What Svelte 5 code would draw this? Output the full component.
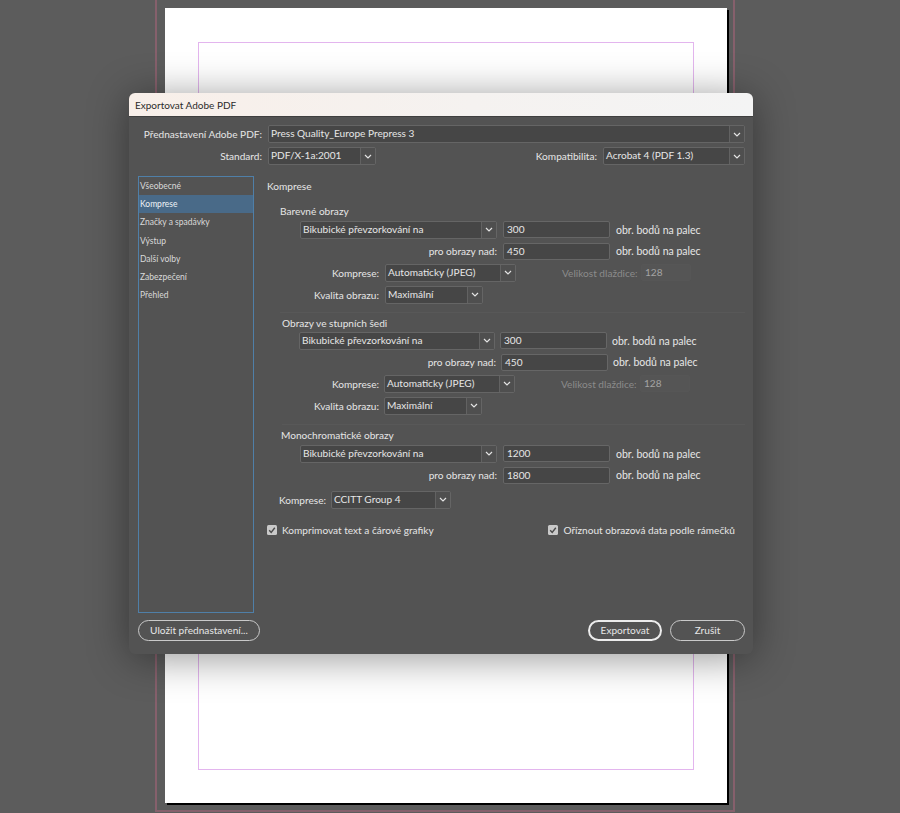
<script>
  const tabs = ['Všeobecné', 'Komprese', 'Značky a spadávky', 'Výstup', 'Další volby', 'Zabezpečení', 'Přehled'];
  const unit = 'obr. bodů na palec';
  const groups = [
    { title: 'Barevné obrazy', cls: 'g1', a: '300', b: '450', full: true },
    { title: 'Obrazy ve stupních šedi', cls: 'g2', a: '300', b: '450', full: true },
    { title: 'Monochromatické obrazy', cls: 'g3', a: '1200', b: '1800', full: false }
  ];
</script>

{#snippet dropdown(text, cls)}
  <div class="select {cls}">
    <span class="value">{text}</span>
    <span class="arrow">
      <svg width="8" height="5" viewBox="0 0 8 5"><path d="M1 1l3 3 3-3" fill="none" stroke="#e4e4e4" stroke-width="1.2"/></svg>
    </span>
  </div>
{/snippet}

{#snippet check(text)}
  <div class="check">
    <span class="box">
      <svg width="10" height="10" viewBox="0 0 10 10"><path d="M2.2 5.2l2 2.2 3.6-4.6" fill="none" stroke="#4a4a4a" stroke-width="1.4"/></svg>
    </span>
    <span>{text}</span>
  </div>
{/snippet}

<div class="canvas">
  <div class="bleed">
    <div class="page">
      <div class="margins"></div>
    </div>
  </div>

  <div class="dialog">
    <div class="titlebar">Exportovat Adobe PDF</div>
    <div class="body">
      <div class="top">
        <div class="toprow">
          <span class="toplabel">Přednastavení Adobe PDF:</span>
          {@render dropdown('Press Quality_Europe Prepress 3', 'preset')}
        </div>
        <div class="toprow">
          <span class="toplabel">Standard:</span>
          {@render dropdown('PDF/X-1a:2001', 'standard')}
          <span class="compat">Kompatibilita:</span>
          {@render dropdown('Acrobat 4 (PDF 1.3)', 'acrobat')}
        </div>
      </div>

      <div class="main">
        <div class="side">
          <ul class="tabs">
            {#each tabs as tab, i}
              <li class:active={i === 1}>{tab}</li>
            {/each}
          </ul>
          <div class="pill save">Uložit přednastavení...</div>
        </div>

        <div class="content">
          <div class="heading">Komprese</div>
          {#each groups as g}
            <section class="group {g.cls}">
              <div class="gtitle">{g.title}</div>
              <div class="rows">
                <div class="row">
                  {@render dropdown('Bikubické převzorkování na', 'sampling')}
                  <div class="input num">{g.a}</div>
                  <span class="unit">{unit}</span>
                </div>
                <div class="row">
                  <span class="lab wide">pro obrazy nad:</span>
                  <div class="input num">{g.b}</div>
                  <span class="unit">{unit}</span>
                </div>
                {#if g.full}
                  <div class="row">
                    <span class="lab">Komprese:</span>
                    {@render dropdown('Automaticky (JPEG)', 'auto')}
                    <span class="muted">Velikost dlaždice:</span>
                    <div class="input tile">128</div>
                  </div>
                  <div class="row">
                    <span class="lab">Kvalita obrazu:</span>
                    {@render dropdown('Maximální', 'quality')}
                  </div>
                {/if}
              </div>
              {#if !g.full}
                <div class="row mono">
                  <span class="monolab">Komprese:</span>
                  {@render dropdown('CCITT Group 4', 'ccitt')}
                </div>
              {/if}
            </section>
          {/each}
          <div class="checks">
            {@render check('Komprimovat text a čárové grafiky')}
            {@render check('Oříznout obrazová data podle rámečků')}
          </div>
          <div class="actions">
            <div class="pill primary">Exportovat</div>
            <div class="pill cancel">Zrušit</div>
          </div>
        </div>
      </div>
    </div>
  </div>
</div>

<style>
  :global(body) {
    margin: 0;
    background: #5b5b5b;
  }
  .canvas {
    position: relative;
    width: 900px;
    height: 813px;
    overflow: hidden;
    background: #5c5c5c;
    font-family: Lato, "Liberation Sans", sans-serif;
    font-size: 10.1px;
    color: #e6e6e6;
  }
  .bleed {
    box-sizing: border-box;
    width: 580px;
    height: 812px;
    margin-left: 155px;
    padding: 8px 0 0 8px;
    border: solid #86606c;
    border-width: 0 2px 2px 2px;
  }
  .page {
    box-sizing: border-box;
    width: 562px;
    height: 795px;
    padding: 34px 33px 34px 33px;
    background: #fff;
    box-shadow: 2px 2px 0 #000;
  }
  .margins {
    box-sizing: border-box;
    height: 728px;
    border: 1px solid #e3b5ee;
  }
  .dialog {
    position: absolute;
    left: 129px;
    top: 93px;
    width: 624px;
    height: 561px;
    display: flex;
    flex-direction: column;
    border-radius: 6px;
    overflow: hidden;
    background: #535353;
    box-shadow: 0 4px 40px rgba(0, 0, 0, 0.42);
  }
  .titlebar {
    box-sizing: border-box;
    height: 24px;
    padding: 5px 0 0 6px;
    flex: none;
    background: linear-gradient(90deg, #f8efe9, #f5f2f0 55%, #f4f4f4);
    border-bottom: 1px solid #3f3f3f;
    color: #2b2b2b;
    font-size: 10px;
    line-height: 14px;
  }
  .body {
    flex: 1;
    display: flex;
    flex-direction: column;
    padding: 8px 8px 13px 9px;
    min-height: 0;
  }
  .top {
    display: flex;
    flex-direction: column;
    gap: 4px;
  }
  .toprow {
    display: flex;
    align-items: center;
    height: 18px;
  }
  .toplabel {
    width: 124px;
    margin-right: 6px;
    text-align: right;
    white-space: nowrap;
  }
  .compat {
    margin-left: auto;
    margin-right: 6px;
  }
  .select {
    box-sizing: border-box;
    display: flex;
    height: 18px;
    flex: none;
    border: 1px solid #656565;
    border-radius: 2px;
    background: #464646;
    line-height: 15px;
  }
  .value {
    flex: 1;
    padding-left: 2px;
    white-space: nowrap;
    overflow: hidden;
  }
  .arrow {
    width: 14px;
    display: flex;
    align-items: center;
    justify-content: center;
    border-left: 1px solid #626262;
    background: #4f4f4f;
  }
  .preset { flex: 1; }
  .standard { width: 108px; }
  .acrobat { width: 142px; }
  .sampling { width: 197px; }
  .auto { width: 131px; }
  .quality { width: 98px; }
  .ccitt { width: 120px; }
  .main {
    flex: 1;
    display: flex;
    margin-top: 11px;
    min-height: 0;
  }
  .side {
    width: 122px;
    flex: none;
    display: flex;
    flex-direction: column;
    margin-right: 7px;
  }
  .tabs {
    box-sizing: border-box;
    width: 116px;
    height: 437px;
    list-style: none;
    margin: 0;
    padding: 0;
    border: 1px solid #4f7fa8;
    font-size: 8.5px;
    color: #d9d9d9;
  }
  .tabs li {
    height: 18.2px;
    line-height: 18.2px;
    padding-left: 1px;
  }
  .tabs li.active {
    background: #496a88;
    color: #eef2f6;
  }
  .pill {
    box-sizing: border-box;
    height: 21px;
    border: 1px solid #c9c9c9;
    border-radius: 11px;
    text-align: center;
    line-height: 19px;
    white-space: nowrap;
  }
  .save {
    width: 122px;
    margin-top: 7px;
  }
  .content {
    flex: 1;
    min-width: 0;
    display: flex;
    flex-direction: column;
  }
  .heading {
    height: 16px;
    margin-top: 2px;
    line-height: 16px;
  }
  .group {
    box-sizing: border-box;
    border-bottom: 1px solid #585858;
  }
  .g1 { margin: 11px 0 0 13px; height: 108px; }
  .g2 { margin: 4px 0 0 15px; height: 108px; }
  .g3 { margin: 4px 0 0 14px; border-bottom: 0; }
  .gtitle {
    height: 16px;
    line-height: 12px;
  }
  .rows {
    display: flex;
    flex-direction: column;
    gap: 4.7px;
    padding-left: 20px;
  }
  .g2 .rows { padding-left: 17px; }
  .g2 .gtitle { height: 15px; }
  .g2 .sampling, .g2 .wide { width: 196px; }
  .g2 .lab:not(.wide) { width: 80px; }
  .g2 .row { gap: 5px; }
  .g2 .muted { margin-left: 41px; }
  .g2 .tile { margin-left: -1px; }
  .g3 .rows { padding-left: 19px; }
  .row {
    display: flex;
    align-items: center;
    height: 17px;
    gap: 6px;
    white-space: nowrap;
  }
  .unit { font-size: 10.5px; }
  .lab {
    width: 79px;
    text-align: right;
  }
  .lab.wide { width: 197px; }
  .input {
    box-sizing: border-box;
    height: 17px;
    border: 1px solid #666;
    border-radius: 2px;
    background: #464646;
    padding-left: 3px;
    line-height: 14px;
  }
  .num { width: 107px; }
  .muted {
    width: 75px;
    margin-left: 40px;
    color: #8b8b8b;
  }
  .tile {
    width: 50px;
    border-color: #565656;
    background: #555;
    color: #a4a4a4;
    margin-left: -2px;
  }
  .mono {
    margin-top: 7.5px;
    gap: 5px;
    margin-left: -2px;
  }
  .monolab { width: 47px; text-align: right; }
  .checks {
    display: flex;
    justify-content: space-between;
    padding-right: 10px;
    margin-top: 14px;
  }
  .check {
    display: flex;
    align-items: center;
    gap: 5px;
    height: 16px;
  }
  .box {
    width: 10px;
    height: 10px;
    display: block;
    border-radius: 1.5px;
    background: #c9c9c9;
    line-height: 0;
  }
  .actions {
    margin-top: auto;
    display: flex;
    justify-content: flex-end;
    gap: 8px;
  }
  .primary {
    width: 74px;
    border: 2px solid #ececec;
    line-height: 17px;
  }
  .cancel { width: 75px; }
</style>
